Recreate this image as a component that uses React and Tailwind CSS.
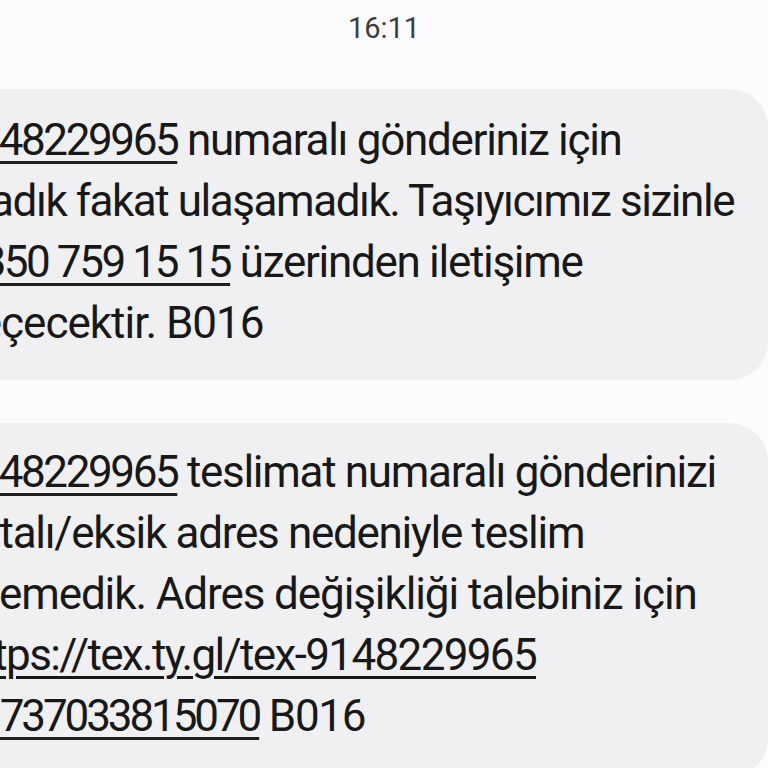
import React from 'react';

const font = { fontFamily: 'Roboto, "Noto Sans", sans-serif' };

function Link({ tight, children }) {
  return (
    <span className={`underline decoration-[3px] underline-offset-[6px] decoration-[#1f1f1f] ${tight ? 'tracking-[-3.1px]' : 'tracking-[-2.4px]'}`}>{children}</span>
  );
}

function Bubble({ className, children }) {
  return (
    <div className={`bg-[#f0f0f2] rounded-r-[38px] overflow-hidden text-[44px] leading-[61px] tracking-[-1.3px] ${className}`}>
      {children}
    </div>
  );
}

export default function App() {
  return (
    <div className="w-[768px] h-[768px] overflow-hidden bg-[#fcfcfe] text-[#181818]" style={font}>
      <div className="pt-[11px] text-center text-[29px] leading-[34px] text-[#3c3c3c]">16:11</div>

      <Bubble className="mt-[44px] pt-[21px] pb-[26px]">
        <div className="whitespace-nowrap -ml-[46px]"><Link>9148229965</Link> numaralı gönderiniz için</div>
        <div className="whitespace-nowrap -ml-[45px] tracking-[-1.45px]">aradık fakat ulaşamadık. Taşıyıcımız sizinle</div>
        <div className="whitespace-nowrap -ml-[41px]"><Link>0850 759 15 15</Link> üzerinden iletişime</div>
        <div className="whitespace-nowrap -ml-[45px] tracking-[-1px]">geçecektir. B016</div>
      </Bubble>

      <Bubble className="mt-[43px] pt-[19px] pb-[30px]">
        <div className="whitespace-nowrap -ml-[46px]"><Link>9148229965</Link> teslimat numaralı gönderinizi</div>
        <div className="whitespace-nowrap -ml-[46px]">hatalı/eksik adres nedeniyle teslim</div>
        <div className="whitespace-nowrap -ml-[47px] tracking-[-1.1px]">edemedik. Adres değişikliği talebiniz için</div>
        <div className="whitespace-nowrap -ml-[42px] tracking-[-1.65px]"><span className="underline decoration-[3px] underline-offset-[6px]">https://tex.ty.gl/tex-9148229965</span></div>
        <div className="whitespace-nowrap -ml-[22px]"><Link tight>1737033815070</Link> B016</div>
      </Bubble>
    </div>
  );
}
